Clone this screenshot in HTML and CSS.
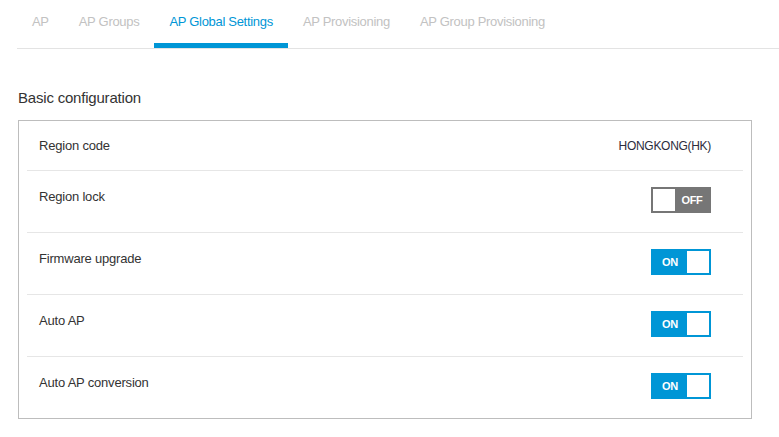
FILE: index.html
```html
<!DOCTYPE html>
<html>
<head>
<meta charset="utf-8">
<link rel="stylesheet" href="styles.css">
</head>
<body>
<nav class="tabs">
  <a class="tab">AP</a>
  <a class="tab">AP Groups</a>
  <a class="tab active">AP Global Settings</a>
  <a class="tab">AP Provisioning</a>
  <a class="tab">AP Group Provisioning</a>
</nav>
<main class="content">
  <h2 class="section-title">Basic configuration</h2>
  <div class="card">
    <div class="row first">
      <span class="label">Region code</span>
      <span class="value">HONGKONG(HK)</span>
    </div>
    <div class="row">
      <span class="label">Region lock</span>
      <span class="toggle off"><span class="knob"></span><span class="state">OFF</span></span>
    </div>
    <div class="row">
      <span class="label">Firmware upgrade</span>
      <span class="toggle on"><span class="state">ON</span><span class="knob"></span></span>
    </div>
    <div class="row">
      <span class="label">Auto AP</span>
      <span class="toggle on"><span class="state">ON</span><span class="knob"></span></span>
    </div>
    <div class="row last">
      <span class="label">Auto AP conversion</span>
      <span class="toggle on"><span class="state">ON</span><span class="knob"></span></span>
    </div>
  </div>
</main>
</body>
</html>
```

FILE: styles.css
```css
html, body {
  margin: 0;
  padding: 0;
  background: #ffffff;
}
body {
  font-family: "Liberation Sans", Arial, sans-serif;
  color: #333333;
}
.tabs {
  display: flex;
  margin-left: 17px;
  border-bottom: 1px solid #e3e3e3;
  height: 48px;
}
.tab {
  display: block;
  padding: 14px 15px 0 15px;
  height: 29px;
  font-size: 13px;
  line-height: 16px;
  color: #c2c2c2;
  letter-spacing: -0.3px;
  border-bottom: 5px solid transparent;
}
.tab.active {
  color: #0096d6;
  border-bottom-color: #0096d6;
}
.content {
  padding: 0 27px 0 18px;
}
.section-title {
  margin: 0;
  padding-top: 40px;
  height: 31px;
  font-size: 15px;
  line-height: 18px;
  font-weight: normal;
  color: #333333;
  letter-spacing: -0.2px;
}
.card {
  border: 1px solid #bdbdbd;
  padding: 0 8px;
}
.row {
  display: flex;
  justify-content: space-between;
  align-items: flex-start;
  padding: 16px 32px 14px 12px;
  border-bottom: 1px solid #e6e6e6;
}
.row.first {
  padding-top: 15px;
}
.row.last {
  border-bottom: none;
}
.label {
  font-size: 13px;
  line-height: 20px;
  letter-spacing: -0.2px;
  color: #333333;
}
.value {
  font-size: 12px;
  line-height: 20px;
  letter-spacing: -0.3px;
  color: #2c2c3c;
}
.toggle {
  display: flex;
  box-sizing: border-box;
  width: 60px;
  height: 26px;
  padding: 2px;
  margin-bottom: 5px;
  margin-top: 0;
}
.toggle.off {
  background: #767676;
}
.toggle.on {
  background: #0096d6;
}
.knob {
  display: block;
  width: 22px;
  height: 22px;
  background: #ffffff;
}
.state {
  flex: 1;
  text-align: center;
  font-size: 11px;
  font-weight: bold;
  line-height: 22px;
  letter-spacing: -0.3px;
  color: #ffffff;
}
```
